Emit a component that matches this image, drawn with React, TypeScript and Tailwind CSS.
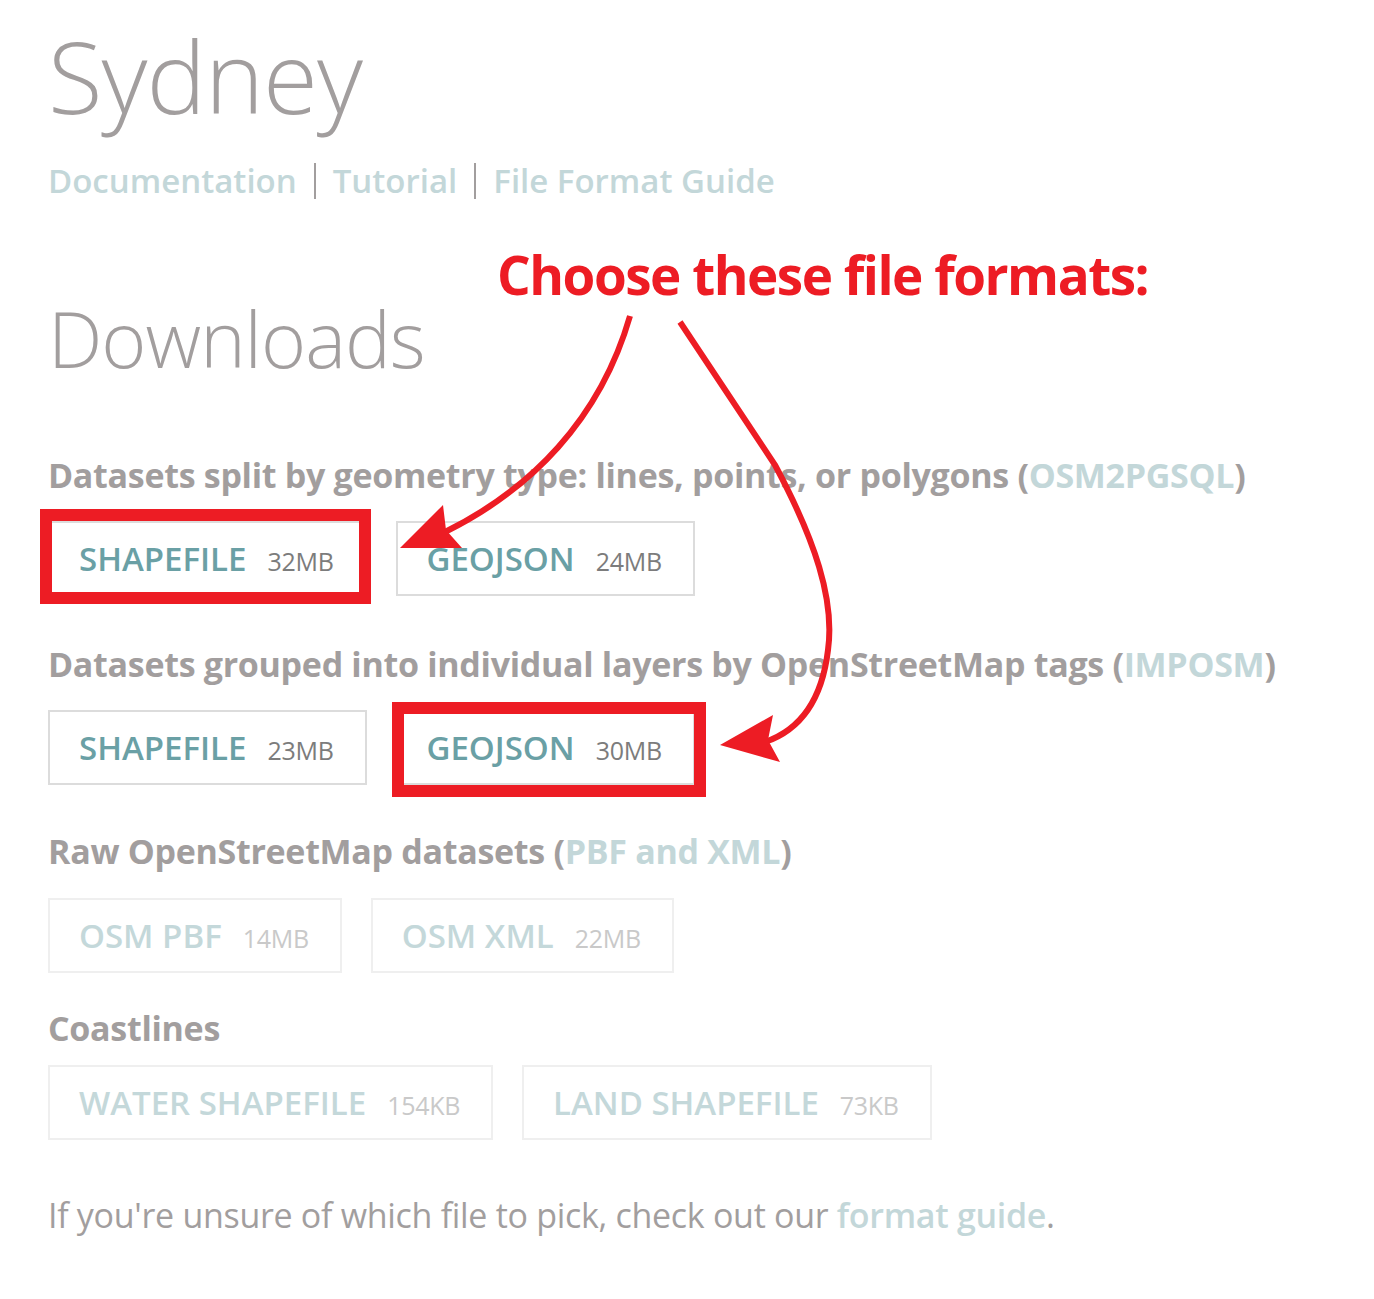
import React from "react";

type Download = { label: string; size: string };

interface ISection {
	title: string;
	link: string;
	items: Download[];
	muted?: boolean;
	className: string;
	rowClassName: string;
}

const SECTIONS: ISection[] = [
	{
		title: "Datasets split by geometry type: lines, points, or polygons",
		link: "OSM2PGSQL",
		className: "mt-[66px]",
		rowClassName: "mt-[26px]",
		items: [
			{ label: "SHAPEFILE", size: "32MB" },
			{ label: "GEOJSON", size: "24MB" },
		],
	},
	{
		title: "Datasets grouped into individual layers by OpenStreetMap tags",
		link: "IMPOSM",
		className: "mt-[48px]",
		rowClassName: "mt-[26px]",
		items: [
			{ label: "SHAPEFILE", size: "23MB" },
			{ label: "GEOJSON", size: "30MB" },
		],
	},
	{
		title: "Raw OpenStreetMap datasets",
		link: "PBF and XML",
		muted: true,
		className: "mt-[46px]",
		rowClassName: "mt-[27px]",
		items: [
			{ label: "OSM PBF", size: "14MB" },
			{ label: "OSM XML", size: "22MB" },
		],
	},
	{
		title: "Coastlines",
		link: "",
		muted: true,
		className: "mt-[35px]",
		rowClassName: "mt-[17px]",
		items: [
			{ label: "WATER SHAPEFILE", size: "154KB" },
			{ label: "LAND SHAPEFILE", size: "73KB" },
		],
	},
];

function DownloadButton({ item, muted }: { item: Download; muted?: boolean }) {
	return (
		<a
			href="#"
			className={`flex items-center h-[75px] pl-[29px] pr-[31px] border-2 ${
				muted ? "border-[#efefef]" : "border-[#dcdcdc]"
			}`}
		>
			<span className="flex items-baseline gap-[21px]">
				<span
					className={`text-[33px] leading-none font-semibold ${
						muted ? "text-[#c4d8da]" : "text-[#6aa0a5]"
					}`}
				>
					{item.label}
				</span>
				<span
					className={`text-[25px] leading-none tracking-[-0.3px] ${
						muted ? "text-[#c9c9c9]" : "text-[#7c7c7c]"
					}`}
				>
					{item.size}
				</span>
			</span>
		</a>
	);
}

function Annotations() {
	return (
		<div className="absolute inset-0 pointer-events-none">
			<p className="absolute left-[497px] top-[248px] text-[53px] leading-none font-bold text-[#ed1c24] tracking-[-1.5px]">
				Choose these file formats:
			</p>
			<svg className="absolute left-0 top-0" width="1374" height="1299" viewBox="0 0 1374 1299">
				<g fill="none" stroke="#ed1c24" strokeWidth="6">
					<path d="M630,316 C600,420 530,490 445,532" />
					<path d="M680,322 L775,465 C815,540 835,600 828,650 C822,700 800,730 765,742" />
				</g>
				<g fill="#ed1c24">
					<path d="M400,548 L443,505 L446,530 L462,548 Z" />
					<path d="M720,745 L773,715 L768,740 L780,762 Z" />
				</g>
				<g fill="none" stroke="#ed1c24" strokeWidth="12">
					<rect x="46" y="515" width="319" height="83" />
					<rect x="398" y="708" width="302" height="83" />
				</g>
			</svg>
		</div>
	);
}

export default function App() {
	return (
		<div className="relative min-h-[1299px] bg-white font-['Open_Sans',sans-serif] text-[#a29e9e]">
			<div className="pl-12 pt-[10px]">
				<h1 className="text-[100px] leading-[130px] font-light text-[#a29e9e] tracking-[-1px]">Sydney</h1>
				<nav className="flex items-center gap-[17px] mt-[19px] text-[33px] leading-[44px] font-semibold text-[#c3d7d9]">
					<a href="#">Documentation</a>
					<span className="w-[2px] h-[36px] bg-[#a29e9e]" />
					<a href="#">Tutorial</a>
					<span className="w-[2px] h-[36px] bg-[#a29e9e]" />
					<a href="#">File Format Guide</a>
				</nav>
				<h2 className="mt-[86px] text-[77px] leading-[100px] font-light tracking-[-1px]">Downloads</h2>
				{SECTIONS.map((section) => (
					<section key={section.title} className={section.className}>
						<h3 className="text-[34px] leading-[40px] font-bold text-[#a29e9e] tracking-[-0.3px]">
							{section.title}
							{section.link && (
								<>
									{" ("}
									<a href="#" className="text-[#c3d7d9]">
										{section.link}
									</a>
									{")"}
								</>
							)}
						</h3>
						<div className={`flex gap-[29px] ${section.rowClassName}`}>
							{section.items.map((item) => (
								<DownloadButton key={item.label} item={item} muted={section.muted} />
							))}
						</div>
					</section>
				))}
				<p className="mt-[53px] text-[34px] leading-[44px] text-[#a29e9e] tracking-[-0.3px]">
					If you're unsure of which file to pick, check out our{" "}
					<a href="#" className="font-semibold text-[#c3d7d9]">
						format guide
					</a>
					.
				</p>
			</div>
			<Annotations />
		</div>
	);
}
